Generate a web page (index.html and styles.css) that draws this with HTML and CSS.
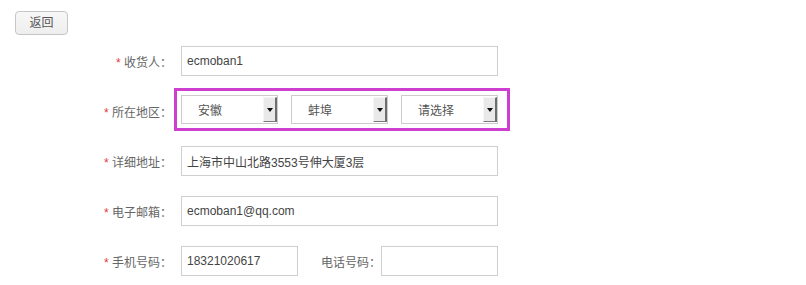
FILE: index.html
```html
<!DOCTYPE html>
<html lang="zh-CN">
<head>
<meta charset="utf-8">
<title>收货地址</title>
<link rel="stylesheet" href="styles.css">
</head>
<body>
<div class="page">
  <div class="toolbar"><button class="btn-back" type="button">返回</button></div>
  <div class="form">
    <div class="row">
      <label class="lbl"><em>*</em> 收货人：</label>
      <input class="ipt ipt-long" type="text" value="ecmoban1">
    </div>
    <div class="row">
      <label class="lbl lbl-region"><em>*</em> 所在地区：</label>
      <div class="region">
        <div class="sel"><span class="sel-text">安徽</span><span class="sel-btn"><i class="arrow"></i></span></div>
        <div class="sel"><span class="sel-text">蚌埠</span><span class="sel-btn"><i class="arrow"></i></span></div>
        <div class="sel"><span class="sel-text">请选择</span><span class="sel-btn"><i class="arrow"></i></span></div>
      </div>
    </div>
    <div class="row">
      <label class="lbl"><em>*</em> 详细地址：</label>
      <input class="ipt ipt-long" type="text" value="上海市中山北路3553号伸大厦3层">
    </div>
    <div class="row">
      <label class="lbl"><em>*</em> 电子邮箱：</label>
      <input class="ipt ipt-long" type="text" value="ecmoban1@qq.com">
    </div>
    <div class="row">
      <label class="lbl"><em>*</em> 手机号码：</label>
      <input class="ipt ipt-short" type="text" value="18321020617">
      <label class="lbl-inline">电话号码：</label>
      <input class="ipt ipt-short" type="text" value="">
    </div>
  </div>
</div>
</body>
</html>
```

FILE: styles.css
```css
html, body {
  margin: 0;
  padding: 0;
  background: #ffffff;
}

body {
  font-family: "Liberation Sans", "Noto Sans CJK SC", sans-serif;
  font-size: 12px;
  color: #555;
}

.page {
  padding-top: 11px;
}

.toolbar {
  padding-left: 15px;
  height: 25px;
}

.btn-back {
  box-sizing: border-box;
  width: 53px;
  height: 24px;
  margin: 0;
  padding: 0;
  border: 1px solid #c6c6c6;
  border-radius: 4px;
  background: linear-gradient(#f7f7f7, #eeeeee);
  font-family: "Liberation Sans", "Noto Sans CJK SC", sans-serif;
  font-size: 12px;
  color: #555;
  line-height: 22px;
}

.form {
  display: flex;
  flex-direction: column;
}

.row {
  display: flex;
  align-items: center;
  height: 50px;
}

.lbl {
  width: 172px;
  margin-right: 9px;
  text-align: right;
  color: #666;
  white-space: nowrap;
}

.lbl em {
  font-style: normal;
  color: #e4393c;
}

.lbl-region {
  margin-right: 2px;
}

.ipt {
  box-sizing: border-box;
  height: 30px;
  margin: 0;
  padding: 0 5px;
  border: 1px solid #cfcfcf;
  background: #fff;
  font-family: "Liberation Sans", "Noto Sans CJK SC", sans-serif;
  font-size: 12px;
  color: #444;
  outline: none;
}

.ipt-long {
  width: 317px;
}

.ipt-short {
  width: 117px;
}

.lbl-inline {
  margin-left: 23px;
  width: 60px;
  color: #666;
  white-space: nowrap;
}

.region {
  box-sizing: border-box;
  display: flex;
  gap: 13px;
  width: 336px;
  height: 43px;
  padding: 4px 9px 4px 4px;
  border: 3px solid #cf3fcf;
  margin-bottom: 3px;
}

.sel {
  box-sizing: border-box;
  display: flex;
  align-items: stretch;
  width: 97px;
  height: 29px;
  border: 1px solid #cccccc;
  background: #fff;
}

.sel-text {
  flex: 1;
  display: flex;
  align-items: center;
  padding-left: 16px;
  color: #555;
}

.sel-btn {
  box-sizing: border-box;
  width: 14px;
  margin: 1px 0 1px 0;
  display: flex;
  align-items: center;
  justify-content: center;
  background: #e9e9e9;
  border-left: 1px solid #f6f6f6;
  border-top: 1px solid #f6f6f6;
  border-right: 2px solid #6e6e6e;
  border-bottom: 1px solid #7a7a7a;
}

.arrow {
  display: block;
  width: 0;
  height: 0;
  border-left: 3px solid transparent;
  border-right: 3px solid transparent;
  border-top: 4px solid #111;
}
```
